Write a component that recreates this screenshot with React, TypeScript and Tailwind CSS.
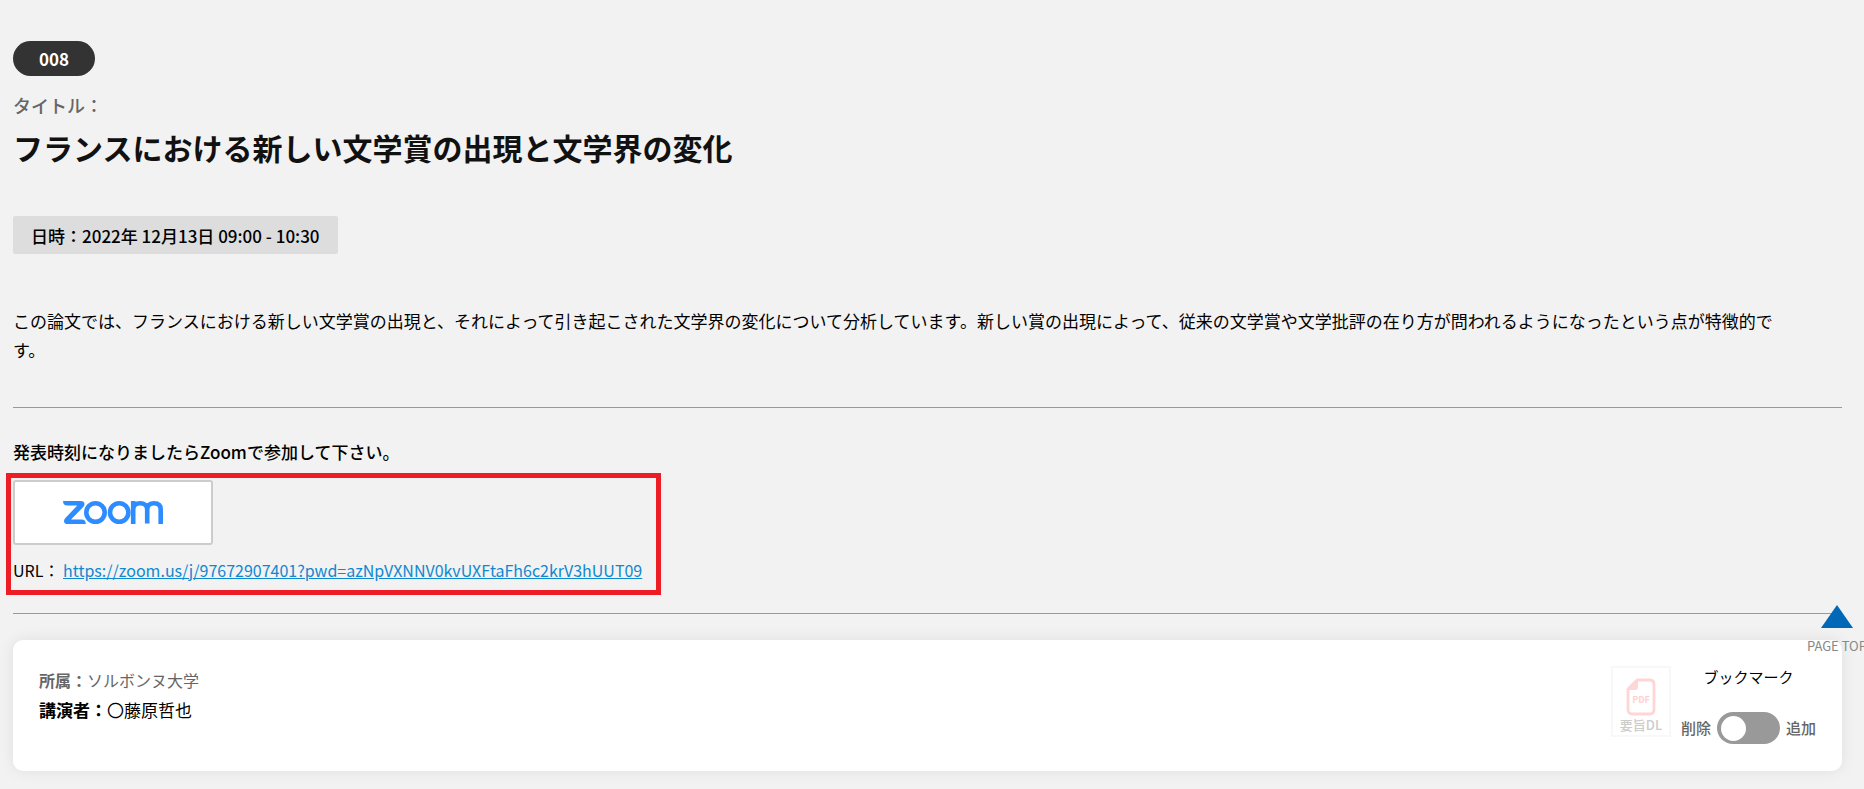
import React from "react";

const zoomUrl =
  "https://zoom.us/j/97672907401?pwd=azNpVXNNV0kvUXFtaFh6c2krV3hUUT09";

function ZoomLogo() {
  return (
    <svg
      viewBox="0 0 100 23"
      className="h-[23px] w-[100px]"
      fill="none"
      stroke="#2d8cff"
      strokeWidth="4.6"
      aria-hidden="true"
    >
      <path
        d="M0 0H17.5Q21.5 0 21.5 3.2Q21.5 4.8 20 6.3L8 18.6H18.5Q22.8 18.6 22.8 23H4.5Q1 23 1 19.9Q1 18.4 2.4 17L14.3 4.5H4.5Q0 4.5 0 0Z"
        fill="#2d8cff"
        stroke="none"
      />
      <circle cx="32.5" cy="11.5" r="9.2" />
      <circle cx="56.2" cy="11.5" r="9.2" />
      <path d="M70.2 23V0M70.2 8.5C70.2 4.2 73 2.3 77.1 2.3S84.2 4.2 84.2 8.5V22.5M84.2 8.5C84.2 4.2 87 2.3 91 2.3S97.7 4.2 97.7 8.5V23" />
    </svg>
  );
}

function PdfIcon() {
  return (
    <svg viewBox="0 0 30 38" className="h-[38px] w-[30px]" aria-hidden="true">
      <path
        d="M11 2H23.5Q28 2 28 6.5V31.5Q28 36 23.5 36H6.5Q2 36 2 31.5V11Z"
        fill="none"
        stroke="#ffd6d6"
        strokeWidth="2.8"
        strokeLinejoin="round"
      />
      <path d="M12 1V8.5Q12 12 8.5 12H1Z" fill="#ffd6d6" />
      <text
        x="15"
        y="25"
        textAnchor="middle"
        fontSize="9"
        fontWeight="700"
        fill="#ffd0d0"
      >
        PDF
      </text>
    </svg>
  );
}

export default function App() {
  return (
    <div className="relative min-h-screen overflow-hidden bg-[#f2f2f2] pt-[41px] pr-[22px] pb-[18px] pl-[13px] font-['Noto_Sans_CJK_JP',sans-serif] text-[17px] leading-[29px] text-black">
      <main>
        <div className="flex h-[35px] w-[82px] items-center justify-center rounded-full bg-[#333] font-bold text-white">
          008
        </div>
        <p className="mt-[15px] text-[18px] font-medium text-[#666]">
          タイトル：
        </p>
        <h1 className="mt-[3px] text-[30px] leading-[48px] font-bold text-[#111]">
          フランスにおける新しい文学賞の出現と文学界の変化
        </h1>
        <div className="mt-[45px] flex h-[38px] w-fit items-center rounded-[2px] bg-[#ddd] px-[18px] font-medium">
          日時：2022年 12月13日 09:00 - 10:30
        </div>
        <p className="mt-[52px] pr-12">
          この論文では、フランスにおける新しい文学賞の出現と、それによって引き起こされた文学界の変化について分析しています。新しい賞の出現によって、従来の文学賞や文学批評の在り方が問われるようになったという点が特徴的です。
        </p>
        <hr className="mt-[43px] border-[#999]" />
        <p className="mt-[29px] font-medium">
          発表時刻になりましたらZoomで参加して下さい。
        </p>
        <section className="mt-[7px] -ml-[7px] w-[655px] max-w-full border-[5px] border-[#ee1c24] pt-[2px] pb-[5px] pl-[2px]">
          <button
            type="button"
            aria-label="Zoom"
            className="flex h-[65px] w-[200px] items-center justify-center rounded-[3px] border-2 border-[#ccc] bg-white"
          >
            <ZoomLogo />
          </button>
          <p className="mt-[11px] text-[16px]">
            URL：{" "}
            <a href={zoomUrl} className="text-[#0f88d0] underline">
              {zoomUrl}
            </a>
          </p>
        </section>
        <hr className="mt-[18px] border-[#999]" />
        <section className="mt-[26px] flex items-start justify-between rounded-[10px] bg-white pt-[26px] pr-[26px] pb-[27px] pl-[26px] shadow-[0_0_15px_rgba(0,0,0,0.08)]">
          <div>
            <p className="text-[16px] text-[#666]">
              <b>所属：</b>ソルボンヌ大学
            </p>
            <p>
              <b>講演者：</b>〇藤原哲也
            </p>
          </div>
          <div className="flex items-start gap-[10px]">
            <button
              type="button"
              disabled
              className="flex h-[71px] w-[60px] flex-col items-center border-2 border-[#f8f8f8] pt-[10px] text-[13px] leading-[18px] font-medium text-[#ccc]"
            >
              <PdfIcon />
              要旨DL
            </button>
            <div className="flex flex-col items-center text-[15px] leading-[22px]">
              <label htmlFor="bookmark">ブックマーク</label>
              <div className="mt-[24px] flex h-8 items-center gap-[6px] font-medium text-[#666]">
                <span>削除</span>
                <input
                  id="bookmark"
                  type="checkbox"
                  role="switch"
                  className="flex h-8 w-[63px] appearance-none items-center rounded-full bg-[#999] px-1 before:size-[25px] before:rounded-full before:bg-white before:content-[''] checked:justify-end"
                />
                <span>追加</span>
              </div>
            </div>
          </div>
        </section>
      </main>
      <a
        href="#"
        className="absolute top-[605px] -right-[3px] flex flex-col items-center text-[13px] leading-[20px] whitespace-nowrap text-[#888]"
      >
        <svg viewBox="0 0 32 23" className="mb-2 h-[23px] w-8" aria-hidden="true">
          <path d="M16 0L32 23H0Z" fill="#0068b7" />
        </svg>
        PAGE TOP
      </a>
    </div>
  );
}
